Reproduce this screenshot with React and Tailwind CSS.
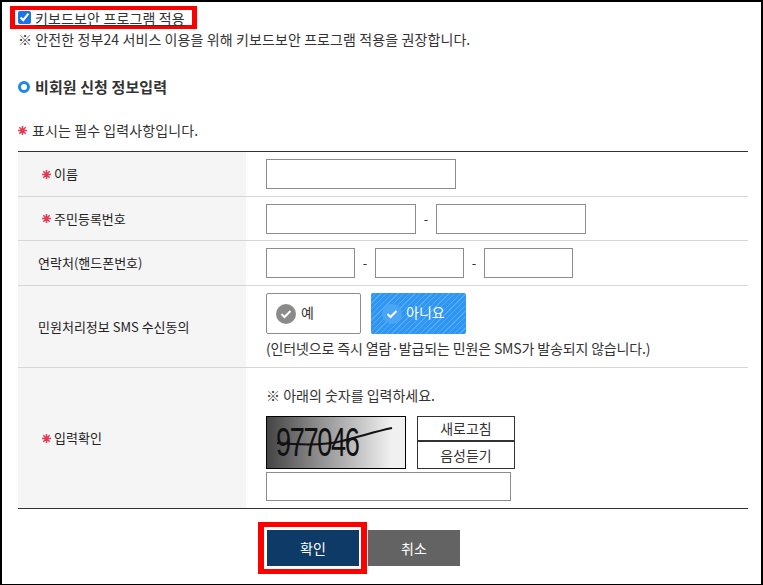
import React from "react";

const font = { fontFamily: '"Noto Sans CJK KR", "Noto Sans", sans-serif' };

function Star({ className }) {
  return (
    <svg className={`shrink-0 ${className}`} width="9" height="9" viewBox="0 0 9 9" fill="none" stroke="#e8384f" strokeWidth="1.5">
      <path d="M4.5 0 V9 M0 4.5 H9 M1.3 1.3 L7.7 7.7 M7.7 1.3 L1.3 7.7" />
    </svg>
  );
}

function Box({ className }) {
  return <input type="text" className={`h-[30px] bg-white border border-[#8c8c8c] ${className}`} />;
}

function Row({ label, required, height, children, last }) {
  return (
    <div className={`flex ${height} ${last ? "" : "border-b border-[#d6d6d6]"}`}>
      <div className={`w-[228px] shrink-0 bg-[#f5f5f5] flex items-center text-[13px] text-[#222] ${required ? "pl-[24px]" : "pl-[20px]"}`}>
        {required && <Star className="mr-[3px]" />}
        {label}
      </div>
      <div className="flex-1 pl-[20px]">{children}</div>
    </div>
  );
}

function Dash() {
  return <span className="text-[13px] text-[#333] w-[20px] text-center">-</span>;
}

function CheckDot({ className, stroke }) {
  return (
    <span className={`w-[20px] h-[20px] rounded-full flex items-center justify-center ${className}`}>
      <svg width="12" height="10" viewBox="0 0 12 10" fill="none">
        <path d="M1.5 5 L4.5 8 L10.5 2" stroke={stroke} strokeWidth="2" />
      </svg>
    </span>
  );
}

export default function App() {
  return (
    <div style={font} className="w-[763px] h-[585px] overflow-hidden bg-white border-t-2 border-l-2 border-r-2 border-b border-black box-border text-[#333]">
      {/* 키보드보안 */}
      <div className="ml-[8px] mt-[4px] w-[187px] h-[23px] border-x-[5px] border-y-[4px] border-[#ff0000] flex items-center pl-[3px]">
        <input type="checkbox" defaultChecked readOnly className="w-[13px] h-[13px] accent-[#1a73e8] m-0" />
        <span className="ml-[4px] text-[14px] leading-none underline text-[#333] tracking-[0.15px] whitespace-nowrap">키보드보안 프로그램 적용</span>
      </div>
      <p className="ml-[16px] mt-[1px] text-[14px] leading-[18px] tracking-[0.1px] whitespace-nowrap">※ 안전한 정부24 서비스 이용을 위해 키보드보안 프로그램 적용을 권장합니다.</p>

      <div className="ml-[16px] mt-[29px] flex items-center">
        <span className="w-[12px] h-[12px] rounded-full border-[3px] border-[#1e88e5]" />
        <h2 className="ml-[5px] text-[15px] leading-[20px] font-bold text-[#333] tracking-[0.1px]">비회원 신청 정보입력</h2>
      </div>

      <div className="ml-[16px] mt-[23px] flex items-center h-[20px] text-[14px] tracking-[0.1px]">
        <Star className="mr-[5px]" />
        표시는 필수 입력사항입니다.
      </div>

      <div className="ml-[16px] mr-[13px] mt-[11px] border-t border-[#333] border-b">
        <Row label="이름" required height="h-[45px]">
          <div className="pt-[7px]"><Box className="w-[190px]" /></div>
        </Row>
        <Row label="주민등록번호" required height="h-[44px]">
          <div className="pt-[7px] flex items-center">
            <Box className="w-[150px]" />
            <Dash />
            <Box className="w-[150px]" />
          </div>
        </Row>
        <Row label="연락처(핸드폰번호)" height="h-[45px]">
          <div className="pt-[7px] flex items-center">
            <Box className="w-[89px]" />
            <Dash />
            <Box className="w-[89px]" />
            <Dash />
            <Box className="w-[89px]" />
          </div>
        </Row>
        <Row label="민원처리정보 SMS 수신동의" height="h-[82px]">
          <div className="pt-[7px]">
            <div className="flex gap-[10px]">
              <div className="w-[95px] h-[41px] border border-[#8c8c8c] rounded-[2px] bg-white flex items-center pl-[9px] gap-[5px] text-[14px]">
                <CheckDot className="bg-[#8a8a8a]" stroke="#ffffff" />
                <span className="-mt-[3px]">예</span>
              </div>
              <div className="w-[95px] h-[41px] rounded-[2px] flex items-center pl-[11px] gap-[4px] text-[14px] text-white bg-[#2f96f3] bg-[repeating-linear-gradient(135deg,#2f96f3_0,#2f96f3_3px,#55aaf6_3px,#55aaf6_4px)]">
                <CheckDot className="bg-[#4aa5f5]" stroke="#ffffff" />
                <span className="-mt-[3px]">아니요</span>
              </div>
            </div>
            <p className="mt-[5px] text-[14px] leading-[18px] tracking-[-0.15px] whitespace-nowrap">(인터넷으로 즉시 열람·발급되는 민원은 SMS가 발송되지 않습니다.)</p>
          </div>
        </Row>
        <Row label="입력확인" required height="h-[140px]" last>
          <div className="pt-[17px]">
            <p className="text-[14px] leading-[20px]">※ 아래의 숫자를 입력하세요.</p>
            <div className="mt-[11px] flex gap-[11px]">
              <div className="relative w-[140px] h-[53px] border border-black bg-[linear-gradient(90deg,#444_0%,#8a8a8a_35%,#f0f0f0_90%)] overflow-hidden">
                <span className="absolute left-[9px] top-[5px] text-[40px] leading-[40px] text-[#111] tracking-[-2px] scale-x-[0.68] origin-left" style={{ fontFamily: '"Liberation Sans", sans-serif' }}>977046</span>
                <svg className="absolute inset-0" width="138" height="51" viewBox="0 0 138 51" fill="none">
                  <path d="M10 26 C35 28 60 28 75 24 C95 19 110 14 125 11" stroke="#111" strokeWidth="2" />
                </svg>
              </div>
              <div className="w-[98px] h-[53px] flex flex-col">
                <div className="h-[25px] border border-[#333] flex items-center justify-center text-[14px]">새로고침</div>
                <div className="h-[28px] border border-[#333] flex items-center justify-center text-[14px]">음성듣기</div>
              </div>
            </div>
            <input type="text" className="mt-[3px] block w-[245px] h-[29px] bg-white border border-[#8c8c8c]" />
          </div>
        </Row>
      </div>

      <div className="ml-[256px] mt-[13px] flex items-center">
        <div className="border-x-[6px] border-y-[5px] border-[#ff0000] p-[3px] pr-[2px]">
          <button className="block w-[92px] h-[36px] bg-[#0d3a66] text-white text-[14px]">확인</button>
        </div>
        <button className="ml-[1px] w-[92px] h-[36px] bg-[#636363] text-white text-[14px]">취소</button>
      </div>
    </div>
  );
}
